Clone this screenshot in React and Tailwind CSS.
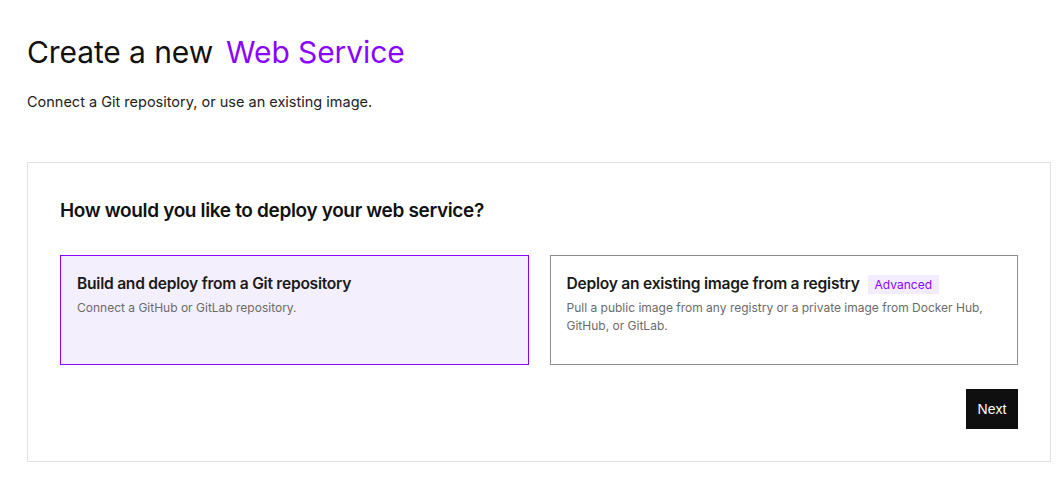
import React from 'react';

const options = [
  {
    key: 'git',
    title: 'Build and deploy from a Git repository',
    desc: 'Connect a GitHub or GitLab repository.',
  },
  {
    key: 'image',
    title: 'Deploy an existing image from a registry',
    badge: 'Advanced',
    desc: 'Pull a public image from any registry or a private image from Docker Hub, GitHub, or GitLab.',
  },
];

export default function App() {
  const selected = 'git';

  return (
    <div className="min-h-screen bg-white pl-[27px] pr-[11px] pt-[33px] text-[#111] font-['Inter','Liberation_Sans',sans-serif]">
      {/* Header */}
      <h1 className="flex items-center gap-[13px] text-[30px] leading-[38px] tracking-[-0.1px]">
        <span>Create a new</span>
        <span className="text-[#8a05ff]">Web Service</span>
      </h1>
      <p className="mt-[20px] text-[14.5px] leading-[22px] text-[#222]">
        Connect a Git repository, or use an existing image.
      </p>

      {/* Panel */}
      <div className="mt-[49px] border border-[#e2e2e2] px-[32px] pt-[34px] pb-[32px]">
        <h2 className="text-[19px] leading-[28px] font-semibold tracking-[-0.35px]">
          How would you like to deploy your web service?
        </h2>

        <div className="mt-[30px] grid grid-cols-2 gap-[21px]">
          {options.map((o) => {
            const active = o.key === selected;
            return (
              <button
                key={o.key}
                className={`h-[110px] text-left flex flex-col px-[16px] pt-[17px] border ${
                  active ? 'border-[#8a05ff] bg-[#f3effd]' : 'border-[#8c8c8c] bg-white'
                }`}
              >
                <div className="flex items-center gap-[8px]">
                  <span className="text-[15.6px] leading-[22px] font-semibold tracking-[-0.25px] text-[#1a1a1a]">
                    {o.title}
                  </span>
                  {o.badge && (
                    <span className="bg-[#f3ecff] px-[7px] text-[12px] leading-[19px] text-[#8a05ff]">
                      {o.badge}
                    </span>
                  )}
                </div>
                <p className="mt-[4px] text-[12px] leading-[18px] text-[#6b6b6b]">{o.desc}</p>
              </button>
            );
          })}
        </div>

        <div className="mt-[24px] flex justify-end">
          <button className="h-[40px] w-[52px] bg-[#0f0f0f] text-white text-[14px] font-['Liberation_Sans',sans-serif]">
            Next
          </button>
        </div>
      </div>
    </div>
  );
}
